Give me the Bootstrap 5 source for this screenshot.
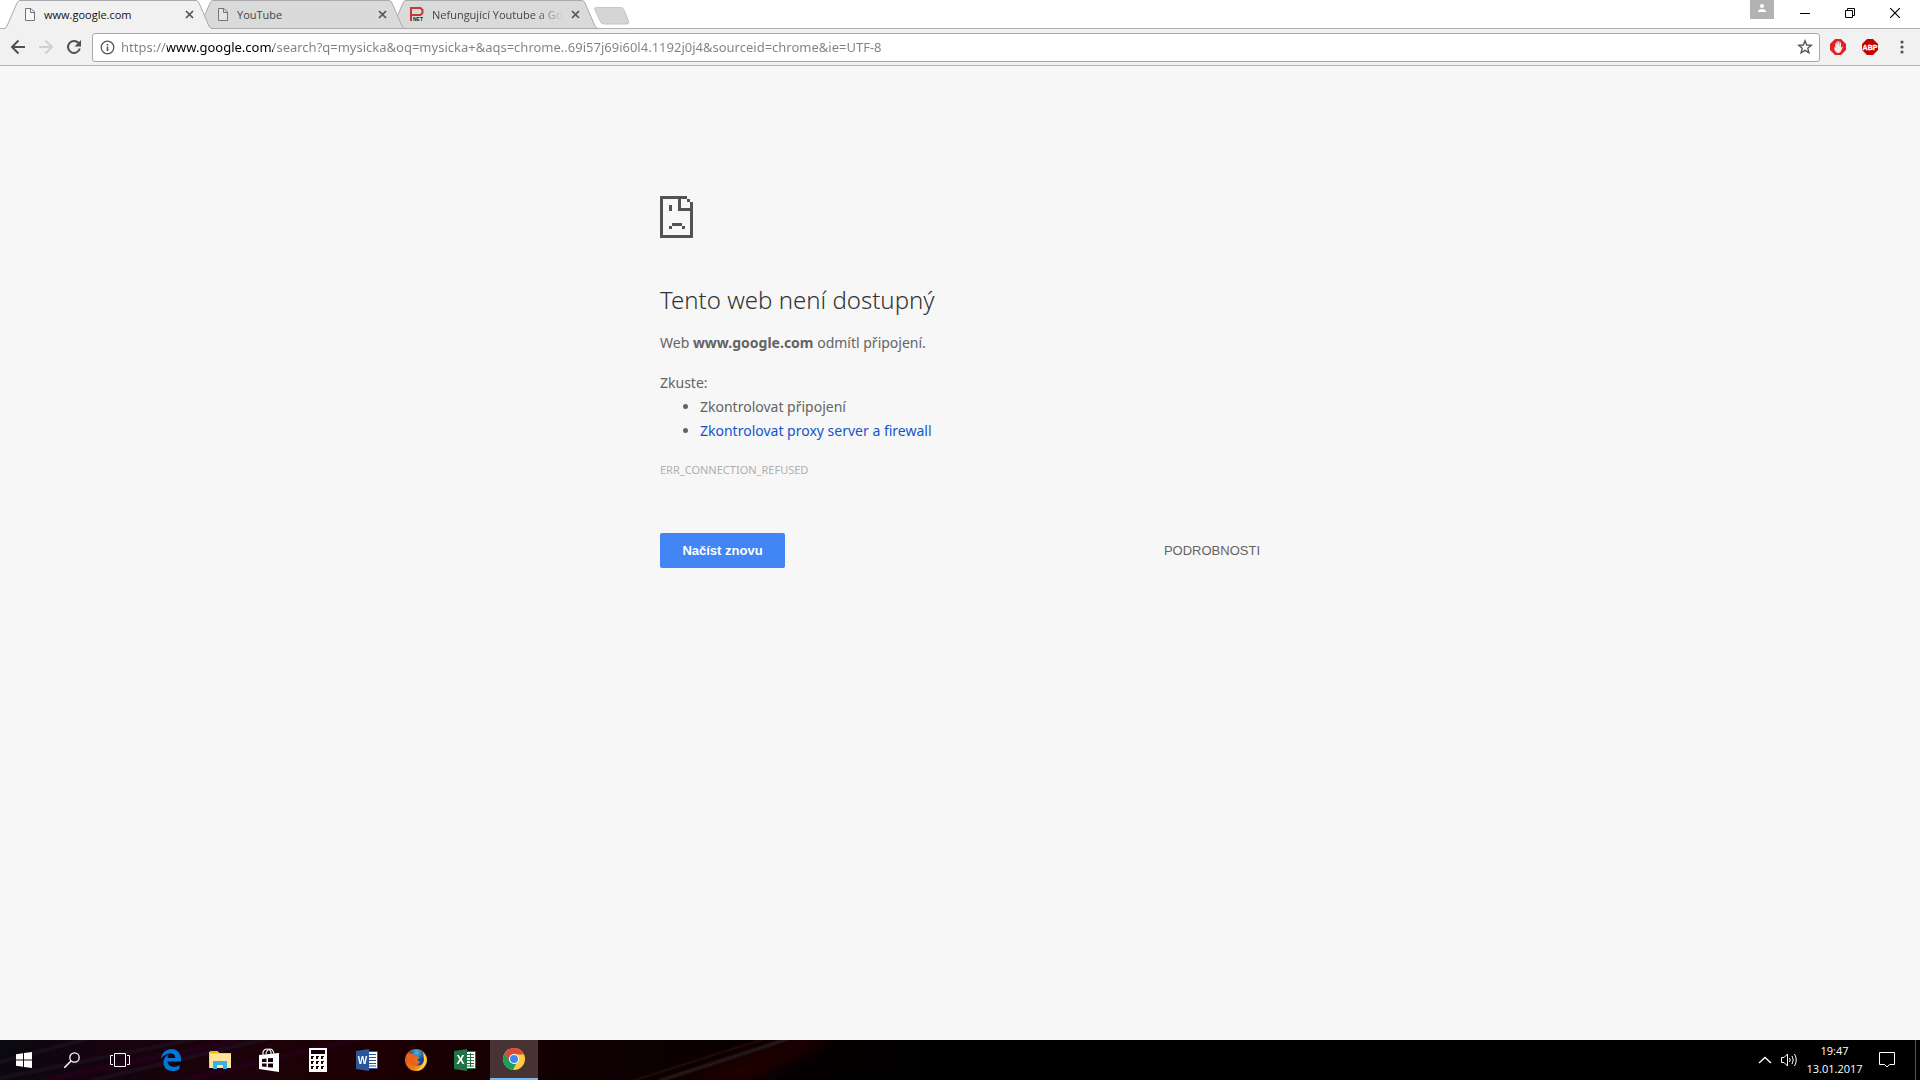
<!DOCTYPE html>
<html lang="cs">
<head>
<meta charset="utf-8">
<meta name="viewport" content="width=device-width, initial-scale=1">
<title>www.google.com</title>
<link href="https://cdn.jsdelivr.net/npm/bootstrap@5.3.0/dist/css/bootstrap.min.css" rel="stylesheet">
<style>
body{font-family:"Noto Sans","Open Sans",sans-serif;background:#f7f7f7;color:#646464;overflow:hidden}
svg{display:block;flex:none}
button{border:0;background:none;padding:0;color:inherit}
.strip{height:29px;background:#fff;border-bottom:1px solid #b2b2b2;padding:0 3px 0 4px}
.tab{width:208px;height:29px;margin-right:-15px;margin-bottom:-1px;padding:0 18px 0 20px}
.tab-shape{position:absolute;inset:0;width:100%;height:100%;z-index:-1}
.tab-a{z-index:3}.tab-b{z-index:2}.tab-c{z-index:1}
.tab-title{font-family:"Open Sans",sans-serif;font-size:11px;line-height:16px;color:#444;margin-left:8px;text-decoration:none;overflow:hidden;white-space:nowrap}
.tab-a .tab-title{color:#111}
.fade-end{-webkit-mask-image:linear-gradient(90deg,#000 80%,transparent);mask-image:linear-gradient(90deg,#000 80%,transparent)}
.new-tab{margin:7px 0 0 11px}
.profile{width:24px;height:19px;background:#b2b2b2;margin-right:8px}
.win{width:45px;height:26px}
.tools{height:37px;background:#f1f1f1;border-bottom:1px solid #b5b5b5;padding:0 2px 0 4px}
.tool{width:28px;height:28px}
.ext{width:32px;height:28px}
.omni{height:29px;margin:0 2px 0 4px;background:#fff;border:1px solid #a8a8a8;border-radius:3px;padding:0 6px 0 7px}
.url{border:0;outline:0;padding:0;margin-left:6px;height:24px;font-size:13px;line-height:24px;
 background:linear-gradient(90deg,#808080 46px,#000 46px,#000 152px,#808080 152px);
 -webkit-background-clip:text;background-clip:text;-webkit-text-fill-color:transparent}
.error-box{max-width:600px;padding-top:130px;font-size:14px;line-height:24px}
.error-title{font-size:24px;line-height:32px;color:#333;font-weight:300;margin:46px 0 15px}
.tips{padding-left:40px;margin-bottom:18px}
.tips a{color:#1155cc;text-decoration:none}
.code{font-size:11px;line-height:18px;color:#afafaf;margin-bottom:54px}
.reload{font:700 13px "Liberation Sans",sans-serif;background:#4285f4;color:#fff;border-radius:2px;width:125px;height:35px}
.details{font:13px "Liberation Sans",sans-serif;color:#646464}
.taskbar{height:40px;background:#000;color:#fff;position:relative;z-index:0;overflow:hidden}
.wall{position:absolute;left:0;top:0;z-index:-1}
.task{width:48px;height:40px}
.apps{gap:1px;margin-left:3px}
.task-on{background:#483334;border-bottom:2px solid #76b9ed}
.clock{width:65px;font-family:"Open Sans",sans-serif;font-size:11px;line-height:18px}
.center-btn{width:40px;height:40px}
.show-desk{width:5px;height:40px;border-left:1px solid #555}
</style>
<script src="https://cdn.jsdelivr.net/npm/bootstrap@5.3.0/dist/js/bootstrap.bundle.min.js"></script>
</head>
<body class="vh-100 d-flex flex-column">
<header>
 <div class="strip d-flex align-items-start">
  <nav class="d-flex" aria-label="Karty">
   <div class="tab tab-a position-relative d-flex align-items-center">
    <svg class="tab-shape" viewBox="0 0 208 29" preserveAspectRatio="none"><path d="M0 29Q2 28 3 26L13 3Q14 .5 16 .5H192Q194 .5 195 3L205 26Q206 28 208 29Z" fill="#f1f1f1"/><path d="M0 28.500Q2 28.500 3 26L13 3Q14 .5 16 .5H192Q194 .5 195 3L205 26Q206 28.500 208 28.500" fill="none" stroke="#aaa"/></svg>
    <svg width="12" height="15" viewBox="0 0 12 15"><path d="M1.500 1.500H7L10.500 5V13.500H1.500ZM6.500 1.500V5.500H10.500" fill="#f8f8f8" stroke="#757575"/></svg>
    <a class="tab-title flex-grow-1" href="#">www.google.com</a>
    <button aria-label="Zavřít kartu"><svg width="9" height="9" viewBox="0 0 9 9"><path d="M1 1L8 8M8 1L1 8" stroke="#555" stroke-width="1.700"/></svg></button>
   </div>
   <div class="tab tab-b position-relative d-flex align-items-center">
    <svg class="tab-shape" viewBox="0 0 208 29" preserveAspectRatio="none"><path d="M0 28.500Q2 28.500 3 26L13 3Q14 .5 16 .5H192Q194 .5 195 3L205 26Q206 28.500 208 28.500Z" fill="#dadada" stroke="#aaa"/></svg>
    <svg width="12" height="15" viewBox="0 0 12 15"><path d="M1.500 1.500H7L10.500 5V13.500H1.500ZM6.500 1.500V5.500H10.500" fill="#e4e4e4" stroke="#757575"/></svg>
    <a class="tab-title flex-grow-1" href="#">YouTube</a>
    <button aria-label="Zavřít kartu"><svg width="9" height="9" viewBox="0 0 9 9"><path d="M1 1L8 8M8 1L1 8" stroke="#555" stroke-width="1.700"/></svg></button>
   </div>
   <div class="tab tab-c position-relative d-flex align-items-center">
    <svg class="tab-shape" viewBox="0 0 208 29" preserveAspectRatio="none"><path d="M0 28.500Q2 28.500 3 26L13 3Q14 .5 16 .5H192Q194 .5 195 3L205 26Q206 28.500 208 28.500Z" fill="#dadada" stroke="#aaa"/></svg>
    <svg width="14" height="15" viewBox="0 0 14 15"><path d="M1 14V1H10.500L12.500 3V6L10.500 8H1" fill="none" stroke="#c33a3a" stroke-width="2"/><text x="3" y="14" font-family="Liberation Sans,sans-serif" font-size="5" font-weight="700" fill="#222">NET</text></svg>
    <a class="tab-title flex-grow-1 fade-end me-2" href="#">Nefungující Youtube a Google</a>
    <button aria-label="Zavřít kartu"><svg width="9" height="9" viewBox="0 0 9 9"><path d="M1 1L8 8M8 1L1 8" stroke="#555" stroke-width="1.700"/></svg></button>
   </div>
  </nav>
  <button class="new-tab" aria-label="Nová karta"><svg width="36" height="18" viewBox="0 0 36 18"><path d="M2.500 .5H27Q29 .5 30 3L34.500 14Q35.500 17 33 17H10Q7 17 6 14L1 3Q0 .5 2.500 .5Z" fill="#d5d5d5" stroke="#c4c4c4"/></svg></button>
  <div class="d-flex ms-auto">
   <button class="profile d-flex justify-content-center" aria-label="Profil"><svg width="10" height="13" viewBox="0 0 10 13"><circle cx="5" cy="6" r="2" fill="#fff"/><path d="M1 12Q1 9 5 9T9 12Z" fill="#fff"/></svg></button>
   <button class="win d-flex align-items-center justify-content-center" aria-label="Minimalizovat"><svg width="10" height="10"><path d="M0 5.500H10" stroke="#000"/></svg></button>
   <button class="win d-flex align-items-center justify-content-center" aria-label="Obnovit"><svg width="10" height="10"><path d="M.5 2.500H7.500V9.500H.5ZM2.500 2V.5H9.500V7.500H8" fill="none" stroke="#000"/></svg></button>
   <button class="win d-flex align-items-center justify-content-center" aria-label="Zavřít"><svg width="10" height="10"><path d="M0 0L10 10M10 0L0 10" stroke="#000" stroke-width="1.200"/></svg></button>
  </div>
 </div>
 <div class="tools d-flex align-items-center">
  <button class="tool d-flex align-items-center justify-content-center" aria-label="Zpět"><svg width="16" height="16" viewBox="0 0 16 16"><path d="M15 8H2.500M8.500 1.500L2 8L8.500 14.500" fill="none" stroke="#505050" stroke-width="2"/></svg></button>
  <button class="tool d-flex align-items-center justify-content-center" aria-label="Vpřed"><svg width="16" height="16" viewBox="0 0 16 16"><path d="M1 8H13.500M7.500 1.500L14 8L7.500 14.500" fill="none" stroke="#d0d0d0" stroke-width="2"/></svg></button>
  <button class="tool d-flex align-items-center justify-content-center" aria-label="Načíst stránku"><svg width="16" height="16" viewBox="0 0 16 16"><path d="M12.500 4A6 6 0 1 0 13.800 9.500" fill="none" stroke="#505050" stroke-width="2"/><path d="M15 1V7.500H8.500Z" fill="#505050"/></svg></button>
  <div class="omni d-flex align-items-center flex-grow-1">
   <svg width="15" height="15" viewBox="0 0 15 15"><circle cx="7.500" cy="7.500" r="6.300" fill="none" stroke="#555" stroke-width="1.300"/><path d="M7.500 6.500V11M7.500 4V5.500" stroke="#555" stroke-width="1.600"/></svg>
   <input class="url flex-grow-1" type="text" aria-label="Adresa" value="https://www.google.com/search?q=mysicka&amp;oq=mysicka+&amp;aqs=chrome..69i57j69i60l4.1192j0j4&amp;sourceid=chrome&amp;ie=UTF-8">
   <button aria-label="Přidat záložku"><svg width="16" height="16" viewBox="0 0 16 16"><path d="M8 1.800L9.700 6L14.300 6.300L10.800 9.300L11.900 13.800L8 11.300L4.100 13.800L5.200 9.300L1.700 6.300L6.300 6Z" fill="none" stroke="#555" stroke-width="1.400"/></svg></button>
  </div>
  <button class="ext d-flex align-items-center justify-content-center" aria-label="Blokování reklam"><svg width="16" height="16" viewBox="0 0 16 16"><path d="M5 0H11L16 5V11L11 16H5L0 11V5Z" fill="#e42020"/><path d="M4 8L5.300 8.800V4.500Q5.700 3.500 6.200 4.500V7.500L6.500 2.800Q7.200 2 7.700 2.800V7.200L8.200 2.300Q9 1.600 9.400 2.500V7.500L10 3.500Q10.800 3 11 4V9L12 7.500Q13 7.500 12.500 8.800L10.500 13Q8 15 5.800 13Q4 11 4 8Z" fill="#f3eeee"/></svg></button>
  <button class="ext d-flex align-items-center justify-content-center" aria-label="Adblock Plus"><svg width="16" height="16" viewBox="0 0 16 16"><path d="M5 0H11L16 5V11L11 16H5L0 11V5Z" fill="#c60000"/><text x="8" y="11" text-anchor="middle" font-family="Liberation Sans,sans-serif" font-size="7" font-weight="700" fill="#fff" stroke="#fff" stroke-width=".3">ABP</text></svg></button>
  <button class="ext d-flex align-items-center justify-content-center" aria-label="Nabídka"><svg width="4" height="14" viewBox="0 0 4 14"><g fill="#555"><circle cx="2" cy="2" r="1.600"/><circle cx="2" cy="7" r="1.600"/><circle cx="2" cy="12" r="1.600"/></g></svg></button>
 </div>
</header>
<main class="flex-grow-1">
 <div class="error-box mx-auto">
  <svg width="33" height="42" viewBox="0 0 33 42" shape-rendering="crispEdges"><path d="M0 0H27V3H21V12H33V15H18V3H3V39H30V15H33V42H0ZM27 3H30V6H27ZM30 6H33V15H30ZM9 9H12V15H9ZM12 27H22V30H12ZM9 30H12V33H9ZM22 30H25V33H22Z" fill="#535353"/></svg>
  <h1 class="error-title">Tento web není dostupný</h1>
  <p class="mb-3">Web <strong>www.google.com</strong> odmítl připojení.</p>
  <p class="mb-0">Zkuste:</p>
  <ul class="tips"><li>Zkontrolovat připojení</li><li><a href="#">Zkontrolovat proxy server a firewall</a></li></ul>
  <p class="code">ERR_CONNECTION_REFUSED</p>
  <div class="d-flex justify-content-between align-items-center">
   <button class="reload">Načíst znovu</button>
   <button class="details">PODROBNOSTI</button>
  </div>
 </div>
</main>
<footer class="taskbar d-flex align-items-center">
 <svg class="wall" width="1920" height="40" viewBox="0 0 1920 40">
  <defs>
   <linearGradient id="base"><stop offset="0" stop-color="#0b0910"/><stop offset=".04" stop-color="#14040f"/><stop offset=".13" stop-color="#1d0209"/><stop offset=".2" stop-color="#1c0003"/><stop offset=".3" stop-color="#100002"/><stop offset=".42" stop-color="#050001"/><stop offset=".5" stop-color="#000"/></linearGradient>
   <filter id="soft"><feGaussianBlur stdDeviation="1"/></filter>
   <filter id="softer"><feGaussianBlur stdDeviation="8"/></filter>
  </defs>
  <rect width="1920" height="40" fill="url(#base)"/>
  <path d="M670 45L800 -5H840L740 45Z" fill="#220003" filter="url(#softer)"/>
  <g filter="url(#soft)">
   <path d="M632 41L764 -1" stroke="#2c0a0d" stroke-width="2"/>
   <path d="M659 41L788 -1" stroke="#2b1e1f" stroke-width="3"/>
   <path d="M0 22L90 -2M0 38L200 -2M90 41L270 -2" stroke="#201a28" stroke-width="4" opacity=".6"/>
   <path d="M40 41L240 0M180 41L360 -2" stroke="#2a0520" stroke-width="6" opacity=".5"/>
  </g>
 </svg>
 <button class="task d-flex align-items-center justify-content-center" aria-label="Start"><svg width="16" height="16" viewBox="0 0 16 16"><path d="M0 2.300L7 1.300V7.500H0ZM8 1.100L16 0V7.500H8ZM0 8.500H7V14.700L0 13.700ZM8 8.500H16V16L8 14.900Z" fill="#fff"/></svg></button>
 <button class="task d-flex align-items-center justify-content-center" aria-label="Hledat"><svg width="16" height="16" viewBox="0 0 16 16"><circle cx="10.500" cy="5.500" r="4.700" fill="none" stroke="#fff" stroke-width="1.300"/><path d="M7 9L0 16" stroke="#fff" stroke-width="1.500"/></svg></button>
 <button class="task d-flex align-items-center justify-content-center" aria-label="Zobrazení úkolů"><svg width="20" height="14" viewBox="0 0 20 14"><path d="M4.500 .5H15.500V13.500H4.500ZM3 2.500H.5V11.500H3M17 2.500H19.500V11.500H17" fill="none" stroke="#fff"/></svg></button>
 <div class="apps d-flex">
  <button class="task d-flex align-items-center justify-content-center" aria-label="Edge"><svg width="20" height="22" viewBox="0 0 20 22"><path d="M0 9.500C1 3.500 5.500 0 10.500 0C16.500 0 20 4.500 20 10V12.500H6.500C6.800 16 9.500 17.800 13 17.800C15.300 17.800 17 17 18.500 16V20C16.500 21.400 14.300 22 12 22C6 22 2.500 18.500 2.500 13.500C2.500 9.500 5 6.800 8 5.500C7 6.600 6.700 7.700 6.500 9H14.300C14.300 6 12.700 4.500 9.800 4.500C6 4.500 2.500 6.200 0 9.500Z" fill="#0078d7"/></svg></button>
  <button class="task d-flex align-items-center justify-content-center" aria-label="Průzkumník souborů"><svg width="22" height="18" viewBox="0 0 22 18"><path d="M0 1H9L11 2H22V17H0Z" fill="#f3cf63"/><path d="M1 3H22V17H1Z" fill="#ffe696"/><path d="M1 0H9V2H1Z" fill="#f5b800"/><path d="M4 18V10H18V18H14V14H8V18Z" fill="#35b1e8"/></svg></button>
  <button class="task d-flex align-items-center justify-content-center" aria-label="Store"><svg width="22" height="24" viewBox="0 0 22 24"><path d="M1 7L21 5V24L1 21Z" fill="#fff"/><path d="M5 8V4Q6 1 9 1T13 4V7M8 6Q9 1 12 1T16 6" fill="none" stroke="#eee" stroke-width="1.200"/><path d="M4 11L8.500 10.500V14H4ZM10 10.300L15 10V14H10ZM4 15.500H8.500V19L4 18.500ZM10 15.500H15V19.500L10 19.200Z" fill="#1b0008"/></svg></button>
  <button class="task d-flex align-items-center justify-content-center" aria-label="Kalkulačka"><svg width="18" height="24" viewBox="0 0 18 24"><path d="M0 0H18V24H0Z" fill="#fff"/><path d="M2 2H16V6H2ZM2 8H5V9H4V11H2ZM7 8H10V9H9V11H7ZM12 8H15V9H14V11H12ZM2 13H5V14H4V16H2ZM7 13H10V14H9V16H7ZM12 13H15V14H14V16H12ZM2 18H5V19H4V21H2ZM7 18H10V19H9V21H7ZM12 18H15V19H14V21H12Z" fill="#1b0008"/></svg></button>
  <button class="task d-flex align-items-center justify-content-center" aria-label="Word"><svg width="22" height="22" viewBox="0 0 22 22"><path d="M12 2.500H21.500V19.500H12Z" fill="#fff" stroke="#2b579a"/><path d="M13 5.500H20M13 8.500H20M13 11.500H20M13 14.500H20M13 17H20" stroke="#2b579a"/><path d="M0 2L13 0V22L0 20Z" fill="#2b579a"/><text x="6.500" y="15" text-anchor="middle" font-family="Liberation Sans,sans-serif" font-size="10" font-weight="700" fill="#fff">W</text></svg></button>
  <button class="task d-flex align-items-center justify-content-center" aria-label="Firefox"><svg width="22" height="22" viewBox="0 0 22 22"><defs><linearGradient id="fox" x1="0" y1="0" x2="1" y2="1"><stop stop-color="#d5451c"/><stop offset=".6" stop-color="#ee7a1b"/><stop offset="1" stop-color="#ffcf35"/></linearGradient><radialGradient id="sea" cx=".5" cy=".2"><stop stop-color="#48b8e4"/><stop offset="1" stop-color="#174a89"/></radialGradient></defs><circle cx="11" cy="11" r="11" fill="url(#fox)"/><path d="M4 3Q11-2 18 3Q21 8 19 13Q16 18 9 16L13 14L15 12L12 12L14 8L10 7L9 5L6 5Z" fill="url(#sea)"/><path d="M1 4L2 6Q4 4 7 5L9 7Q11 7 13 8L11 10Q9 10 9 12Q12 14 15 12Q14 17 9 17Q2 14 1 4Z" fill="#e8641b"/><path d="M18 3Q23 9 21 14Q18 21 11 22Q18 18 19 11Z" fill="#ffd04a"/></svg></button>
  <button class="task d-flex align-items-center justify-content-center" aria-label="Excel"><svg width="22" height="22" viewBox="0 0 22 22"><path d="M12 2.500H21.500V19.500H12Z" fill="#fff" stroke="#217346"/><path d="M13 5.500H20M13 8.500H20M13 11.500H20M13 14.500H20M13 17H20M16.500 4V18" stroke="#217346"/><path d="M0 2L13 0V22L0 20Z" fill="#217346"/><text x="6.500" y="15" text-anchor="middle" font-family="Liberation Sans,sans-serif" font-size="12" font-weight="700" fill="#fff">X</text></svg></button>
  <button class="task task-on d-flex align-items-center justify-content-center" aria-label="Chrome"><svg width="22" height="22" viewBox="0 0 22 22"><circle cx="11" cy="11" r="11" fill="#ffcd42"/><path d="M1.500 5.500A11 11 0 0 1 20.500 5.500L20.900 6.500H11L6.500 13.500Z" fill="#db4b3c"/><path d="M1.500 5.500L6.700 13.500L11 16L13 16L10 22A11 11 0 0 1 1.500 5.500Z" fill="#1a9e5a"/><circle cx="11" cy="11" r="5" fill="#fff"/><circle cx="11" cy="11" r="4" fill="#4285f4"/></svg></button>
 </div>
 <div class="d-flex align-items-center ms-auto">
  <button class="me-2" aria-label="Skryté ikony"><svg width="14" height="8" viewBox="0 0 14 8"><path d="M1 7L7 1.500L13 7" fill="none" stroke="#fff" stroke-width="1.300"/></svg></button>
  <button aria-label="Hlasitost"><svg width="18" height="14" viewBox="0 0 18 14"><path d="M1.500 4.500H4L7.500 1V13L4 9.500H1.500Z" fill="none" stroke="#fff"/><path d="M9.500 5Q11 7 9.500 9M12 3Q14.500 7 12 11M14.500 1Q18 7 14.500 13" fill="none" stroke="#fff"/></svg></button>
  <button class="clock text-center ms-1">19:47<br>13.01.2017</button>
  <button class="center-btn me-2 d-flex align-items-center justify-content-center" aria-label="Centrum akcí"><svg width="16" height="16" viewBox="0 0 16 16"><path d="M.5 .5H15.500V12.500H10.500L8 15L5.500 12.500H.5Z" fill="none" stroke="#fff"/></svg></button>
  <button class="show-desk" aria-label="Zobrazit plochu"></button>
 </div>
</footer>
</body>
</html>
